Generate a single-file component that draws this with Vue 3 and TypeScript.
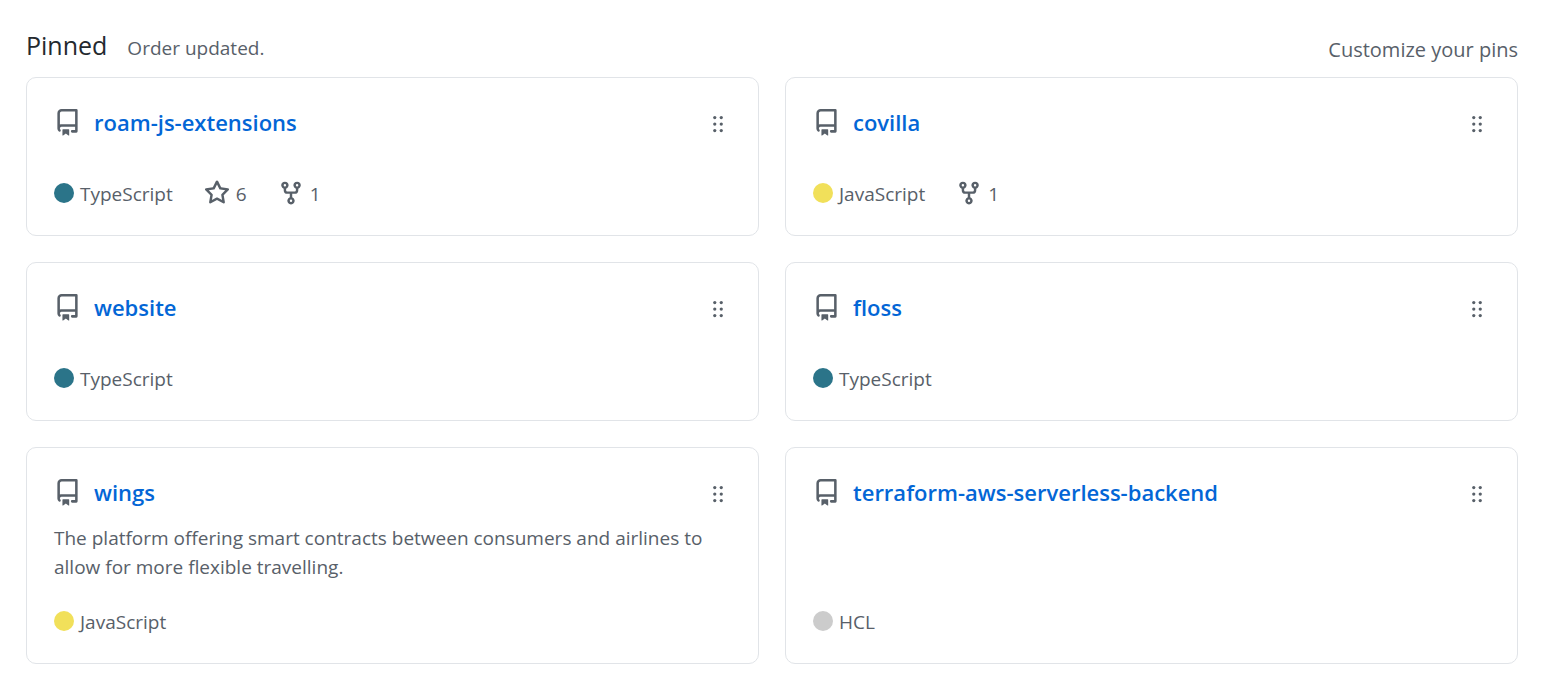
<script setup lang="ts">
interface Repo {
  name: string
  description?: string
  language: string
  tone: 'typescript' | 'javascript' | 'hcl'
  stars?: number
  forks?: number
}

const repos: Repo[] = [
  { name: 'roam-js-extensions', language: 'TypeScript', tone: 'typescript', stars: 6, forks: 1 },
  { name: 'covilla', language: 'JavaScript', tone: 'javascript', forks: 1 },
  { name: 'website', language: 'TypeScript', tone: 'typescript' },
  { name: 'floss', language: 'TypeScript', tone: 'typescript' },
  {
    name: 'wings',
    description:
      'The platform offering smart contracts between consumers and airlines to allow for more flexible travelling.',
    language: 'JavaScript',
    tone: 'javascript',
  },
  { name: 'terraform-aws-serverless-backend', language: 'HCL', tone: 'hcl' },
]
</script>

<template>
  <main class="pinned">
    <header class="head">
      <h2 class="title">Pinned</h2>
      <span class="status" role="status">Order updated.</span>
      <button type="button" class="customize">Customize your pins</button>
    </header>

    <ol class="grid">
      <li v-for="repo in repos" :key="repo.name" class="card">
        <div class="card-head">
          <svg class="icon repo-icon" viewBox="0 0 16 16" aria-hidden="true">
            <path fill-rule="evenodd" d="M2 2.5A2.5 2.5 0 014.5 0h8.75a.75.75 0 01.75.75v12.5a.75.75 0 01-.75.75h-2.5a.75.75 0 110-1.5h1.75v-2h-8a1 1 0 00-.714 1.7.75.75 0 01-1.072 1.05A2.495 2.495 0 012 11.5v-9zm10.5-1V9h-8c-.356 0-.694.074-1 .208V2.5a1 1 0 011-1h8zM5 12.25v3.25a.25.25 0 00.4.2l1.45-1.087a.25.25 0 01.3 0L8.6 15.7a.25.25 0 00.4-.2v-3.25a.25.25 0 00-.25-.25h-3.5a.25.25 0 00-.25.25z" />
          </svg>
          <a class="name" href="#">{{ repo.name }}</a>
          <button type="button" class="grip" :aria-label="`Reorder ${repo.name}`">
            <svg class="icon" viewBox="0 0 16 16" aria-hidden="true">
              <circle cx="6" cy="4" r="1" />
              <circle cx="10" cy="4" r="1" />
              <circle cx="6" cy="8" r="1" />
              <circle cx="10" cy="8" r="1" />
              <circle cx="6" cy="12" r="1" />
              <circle cx="10" cy="12" r="1" />
            </svg>
          </button>
        </div>

        <p class="description">{{ repo.description }}</p>

        <div class="stats">
          <span class="language"><span class="dot" :class="repo.tone"></span>{{ repo.language }}</span>
          <a v-if="repo.stars" class="stat" href="#" :aria-label="`${repo.stars} stars`">
            <svg class="icon" viewBox="0 0 16 16" aria-hidden="true">
              <path fill-rule="evenodd" d="M8 .25a.75.75 0 01.673.418l1.882 3.815 4.21.612a.75.75 0 01.416 1.279l-3.046 2.97.719 4.192a.75.75 0 01-1.088.791L8 12.347l-3.766 1.98a.75.75 0 01-1.088-.79l.72-4.194L.818 6.374a.75.75 0 01.416-1.28l4.21-.611L7.327.668A.75.75 0 018 .25zm0 2.445L6.615 5.5a.75.75 0 01-.564.41l-3.097.45 2.24 2.184a.75.75 0 01.216.664l-.528 3.084 2.769-1.456a.75.75 0 01.698 0l2.77 1.456-.53-3.084a.75.75 0 01.216-.664l2.24-2.183-3.096-.45a.75.75 0 01-.564-.41L8 2.694v.001z" />
            </svg>
            {{ repo.stars }}
          </a>
          <a v-if="repo.forks" class="stat" href="#" :aria-label="`${repo.forks} forks`">
            <svg class="icon" viewBox="0 0 16 16" aria-hidden="true">
              <path fill-rule="evenodd" d="M5 3.25a.75.75 0 11-1.5 0 .75.75 0 011.5 0zm0 2.122a2.25 2.25 0 10-1.5 0v.878A2.25 2.25 0 005.75 8.5h1.5v2.128a2.251 2.251 0 101.5 0V8.5h1.5a2.25 2.25 0 002.25-2.25v-.878a2.25 2.25 0 10-1.5 0v.878a.75.75 0 01-.75.75h-4.5A.75.75 0 015 6.25v-.878zm3.75 7.378a.75.75 0 11-1.5 0 .75.75 0 011.5 0zm3-8.75a.75.75 0 100-1.5.75.75 0 000 1.5z" />
            </svg>
            {{ repo.forks }}
          </a>
        </div>
      </li>
    </ol>
  </main>
</template>

<style>
body {
  margin: 0;
  background: #fff;
}
</style>

<style scoped>
.pinned {
  padding: 26px 33px 26px 26px;
  font-family: 'Segoe UI', 'Open Sans', 'Noto Sans', sans-serif;
  font-size: 19px;
  line-height: 29px;
  color: #586069;
}

.head {
  display: flex;
  align-items: baseline;
  margin-bottom: 12px;
}

.title {
  margin: 0 20px 0 0;
  font-size: 25px;
  line-height: 39px;
  font-weight: 400;
  color: #24292e;
}

.customize {
  align-self: flex-end;
  margin-left: auto;
  padding: 0;
  border: 0;
  background: none;
  font: inherit;
  font-size: 20px;
  line-height: 31px;
  color: inherit;
  cursor: pointer;
}

.grid {
  display: grid;
  grid-template-columns: repeat(2, minmax(0, 1fr));
  gap: 26px;
  margin: 0;
  padding: 0;
  list-style: none;
}

.card {
  display: flex;
  flex-direction: column;
  padding: 27px 27px 26px;
  border: 1px solid #e1e4e8;
  border-radius: 10px;
}

.card-head {
  display: flex;
  align-items: center;
}

.icon {
  display: block;
  flex: none;
  width: 26px;
  height: 26px;
  fill: currentColor;
}

.repo-icon {
  width: 27px;
  height: 27px;
  margin-bottom: 1px;
}

.name {
  margin-left: 13px;
  font-size: 22px;
  line-height: 35px;
  font-weight: 600;
  color: #0366d6;
  text-decoration: none;
}

.grip {
  margin: 2px 0 0 auto;
  padding: 0;
  border: 0;
  background: none;
  color: inherit;
  cursor: grab;
}

.description {
  flex: 1;
  margin: 14px 0 26px;
}

.stats {
  display: flex;
  align-items: center;
  gap: 31px;
}

.language,
.stat {
  display: flex;
  align-items: center;
  gap: 6px;
}

.stat {
  color: inherit;
  text-decoration: none;
}

.stat .icon,
.dot {
  margin-bottom: 3px;
}

.dot {
  width: 20px;
  height: 20px;
  border-radius: 50%;
}

.typescript {
  background: #2b7489;
}

.javascript {
  background: #f1e05a;
}

.hcl {
  background: #ccc;
}
</style>
